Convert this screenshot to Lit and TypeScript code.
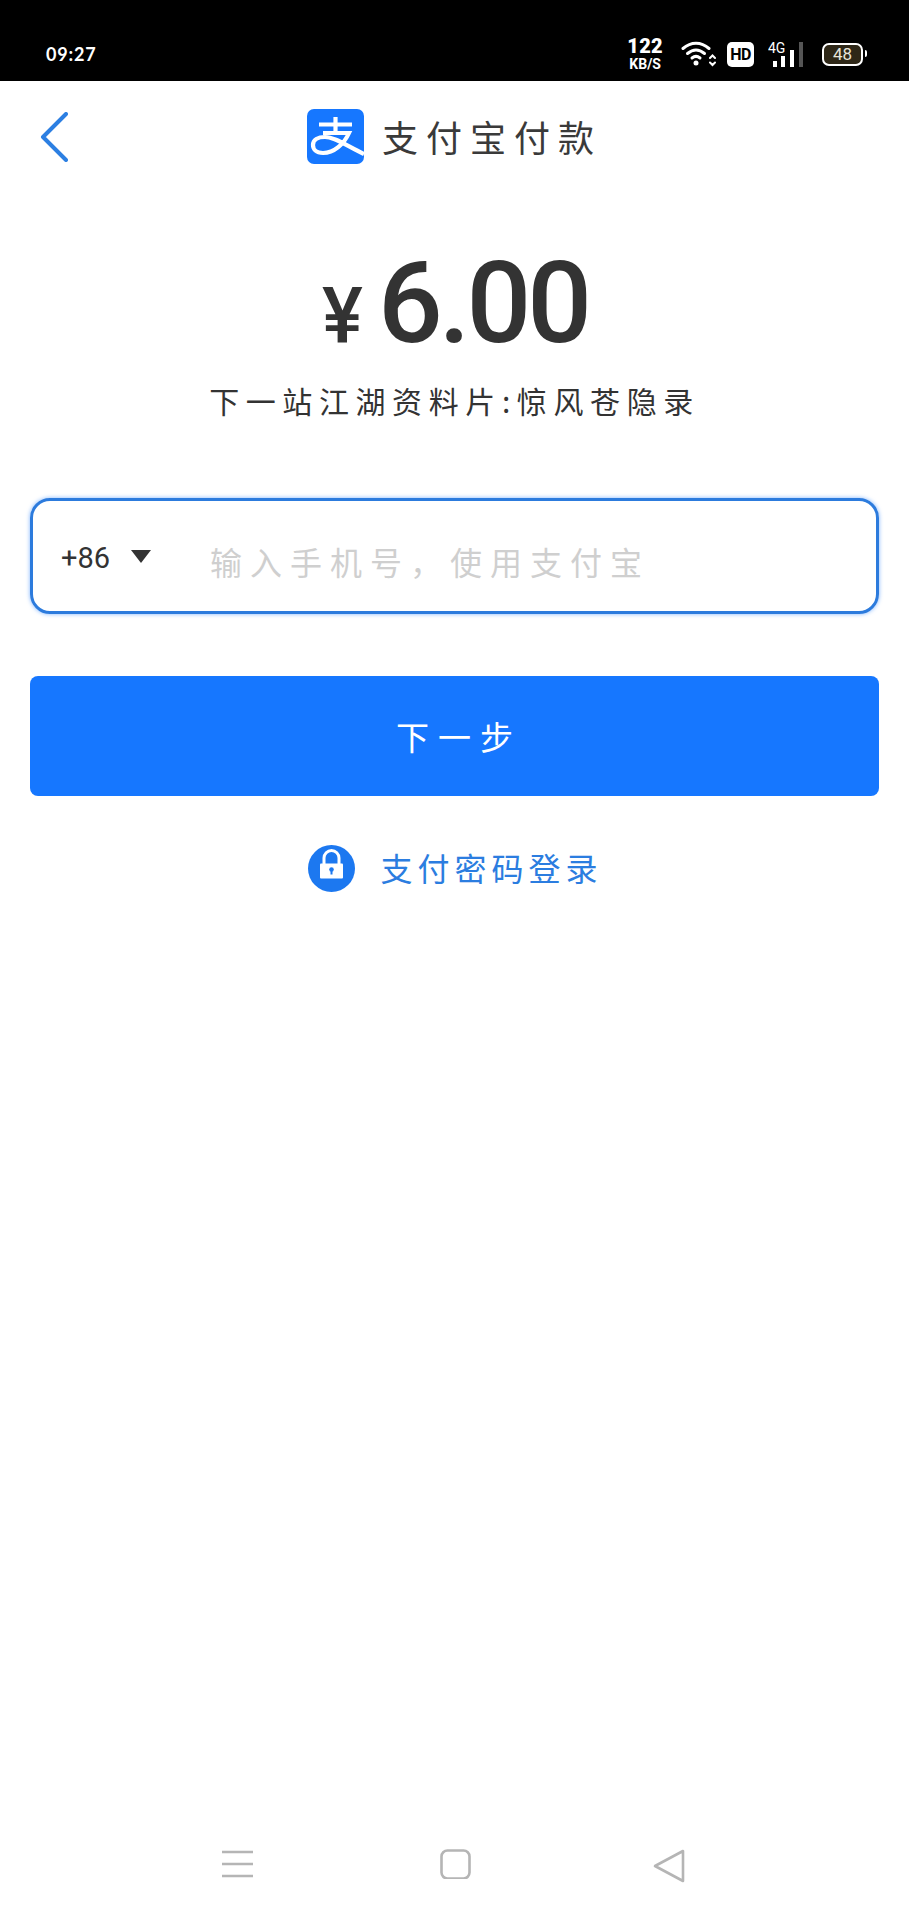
import { LitElement, html, css } from "lit";
import { customElement } from "lit/decorators.js";

@customElement("app-root")
export class AppRoot extends LitElement {
  static styles = css`
    :host { display: block; width: 909px; height: 1920px; background: #fff; font-family: "Noto Sans CJK SC", "Noto Sans", sans-serif; overflow: hidden; }
    .page { height: 1920px; display: flex; flex-direction: column; }
    .status { height: 81px; background: #000; color: #fff; display: flex; align-items: center; padding: 27px 46px 0 46px; box-sizing: border-box; flex: none; }
    .time { font: 700 18px/1 "Lato", "Roboto", sans-serif; letter-spacing: 0.8px; margin-right: auto; }
    .speed { display: flex; flex-direction: column; align-items: center; font-family: "Roboto", sans-serif; font-weight: 700; color: #fff; margin-right: 18px; }
    .speed b { font-size: 20px; line-height: 21px; letter-spacing: 0.3px; }
    .speed span { font-size: 14px; line-height: 15px; }
    .wifi { margin-right: 11px; display: block; }
    .hd { width: 27px; height: 25px; border-radius: 5px; background: #fff; color: #000; font: 700 16px/25px "Roboto", sans-serif; text-align: center; margin-right: 14px; letter-spacing: -0.5px; }
    .sig { margin-right: 16px; display: block; }
    .batt { width: 41px; height: 23px; box-sizing: border-box; border: 2.5px solid #fff; border-radius: 7px; background: #2e2717; color: #e8e4da; font: 400 17px/18px "Roboto", sans-serif; text-align: center; position: relative; }
    .batt::after { content: ""; position: absolute; right: -5.5px; top: 5px; width: 2px; height: 7px; background: #fff; border-radius: 0 2px 2px 0; }

    .header { display: flex; align-items: center; padding: 28px 0 0 40px; height: 55px; flex: none; }
    .back { display: block; margin-right: 239px; }
    .logo { display: block; margin-right: 18px; }
    .title { font-size: 36px; line-height: 55px; letter-spacing: 8px; color: #3a3a3a; white-space: nowrap; }

    .amount { display: flex; justify-content: center; align-items: baseline; margin-top: 84px; color: #333; line-height: 110px; height: 110px; padding-left: 1px; }
    .yen { font: 500 77px/110px "Roboto", sans-serif; margin-right: 15px; }
    .num { font: 500 114px/110px "Roboto", sans-serif; letter-spacing: -4px; }
    .sub { text-align: center; font-size: 30px; line-height: 40px; letter-spacing: 6.6px; color: #333; margin-top: 22px; white-space: nowrap; font-weight: 400; }

    .field { margin: 78px 30px 0; height: 116px; box-sizing: border-box; border: 3px solid #2c7bdd; border-radius: 20px; box-shadow: 0 0 4px rgba(22,119,255,.55); display: flex; align-items: center; padding: 0 0 4px 28px; }
    .cc { font: 400 29px/1 "Roboto", sans-serif; color: #333; width: 50px; margin-top: 8px; }
    .caret { width: 0; height: 0; border-left: 10.5px solid transparent; border-right: 10.5px solid transparent; border-top: 13px solid #333; margin: 4px 59px 0 20px; }
    .ph { font-size: 32px; line-height: 40px; letter-spacing: 8px; color: #cfcfcf; margin-top: 14px; white-space: nowrap; font-weight: 400; }

    .btn { margin: 62px 30px 0; height: 120px; border-radius: 8px; background: #1677ff; color: #fff; display: flex; align-items: center; justify-content: center; font-size: 33px; letter-spacing: 9px; padding-left: 9px; }

    .pw { display: flex; align-items: center; justify-content: center; margin-top: 49px; height: 47px; color: #2b7de0; font-size: 32px; letter-spacing: 5px; gap: 25px; padding-left: 2px; }
    .pw svg { display: block; }
    .pw span { padding-bottom: 3px; }

    .nav { margin-top: auto; height: 71px; display: flex; flex: none; padding: 0 0 0 222px; align-items: flex-start; }
    .nav svg { display: block; }
    .nav .a { margin-right: 187px; }
    .nav .b { margin-right: 182px; }
  `;

  render() {
    return html`<div class="page">
      <div class="status">
        <div class="time">09:27</div>
        <div class="speed"><b>122</b><span>KB/S</span></div>
        <svg class="wifi" width="35" height="26" viewBox="0 0 35 26" fill="none" stroke="#fff" stroke-width="3" stroke-linecap="round">
          <path d="M2 7.5C10 .5 20 .5 28 7.5" /><path d="M6.5 12.5C12 8 18 8 23.5 12.5" /><path d="M11 17c2.5-2 5.5-2 8 0" />
          <circle cx="15" cy="22" r="2.5" fill="#fff" stroke="none" />
          <path d="M29 17l2.5-2.5 2.5 2.5M29 21.5l2.5 2.5 2.5-2.5" stroke-width="2" />
        </svg>
        <div class="hd">HD</div>
        <svg class="sig" width="38" height="26" viewBox="0 0 38 26">
          <text x="0" y="12" font-family="Roboto, sans-serif" font-size="14" fill="#fff">4G</text>
          <rect x="5" y="20" width="4" height="6" fill="#fff" />
          <rect x="13" y="15" width="4" height="11" fill="#fff" />
          <rect x="22" y="9" width="4" height="17" fill="#fff" />
          <rect x="31" y="1" width="4" height="25" fill="#555" />
        </svg>
        <div class="batt">48</div>
      </div>

      <div class="header">
        <svg class="back" width="28" height="50" viewBox="0 0 28 50" fill="none" stroke="#2c7fe2" stroke-width="4" stroke-linecap="round" stroke-linejoin="round"><path d="M26 2L3 25l23 23" /></svg>
        <svg class="logo" width="57" height="55" viewBox="0 0 57 55">
          <defs><clipPath id="lc"><rect width="57" height="55" rx="7" /></clipPath></defs>
          <rect width="57" height="55" rx="7" fill="#1677ff" />
          <path d="M12 15.5h33M28.5 8v15M16 24h26C37 35 27 44 16 44 9 44 6 40 6 36 6 31 11 28 18 28 28 28 40 37 57 45" fill="none" stroke="#fff" stroke-width="4.2" clip-path="url(#lc)" />
        </svg>
        <div class="title">支付宝付款</div>
      </div>

      <div class="amount"><span class="yen">¥</span><span class="num">6.00</span></div>
      <div class="sub">下一站江湖资料片:惊风苍隐录</div>

      <div class="field">
        <span class="cc">+86</span>
        <span class="caret"></span>
        <span class="ph">输入手机号${"\uff0c"}使用支付宝</span>
      </div>

      <div class="btn">下一步</div>

      <div class="pw">
        <svg width="47" height="47" viewBox="0 0 47 47">
          <circle cx="23.5" cy="23.5" r="23.5" fill="#1c78f0" />
          <path d="M15.5 19v-6a7.5 7.5 0 0 1 15 0v6" fill="none" stroke="#fff" stroke-width="3" transform="translate(.5)" />
          <rect x="12" y="18.5" width="23" height="15" rx="1" fill="#fff" />
          <circle cx="23.5" cy="24.5" r="2.3" fill="#1c78f0" />
          <rect x="22.5" y="24.5" width="2" height="5" fill="#1c78f0" />
        </svg>
        <span>支付密码登录</span>
      </div>

      <div class="nav">
        <svg class="a" width="31" height="30" viewBox="0 0 31 30" stroke="#b5b5b5" stroke-width="2.6"><path d="M0 3h31M0 15h31M0 27h31" /></svg>
        <svg class="b" width="31" height="30" viewBox="0 0 31 30" fill="none" stroke="#b5b5b5" stroke-width="2.6"><rect x="1.5" y="1.5" width="28" height="28" rx="6" /></svg>
        <svg width="32" height="34" viewBox="0 0 32 34" fill="none" stroke="#b5b5b5" stroke-width="2.6" stroke-linejoin="round"><path d="M30 2v30L2 17z" /></svg>
      </div>
    </div>`;
  }
}
